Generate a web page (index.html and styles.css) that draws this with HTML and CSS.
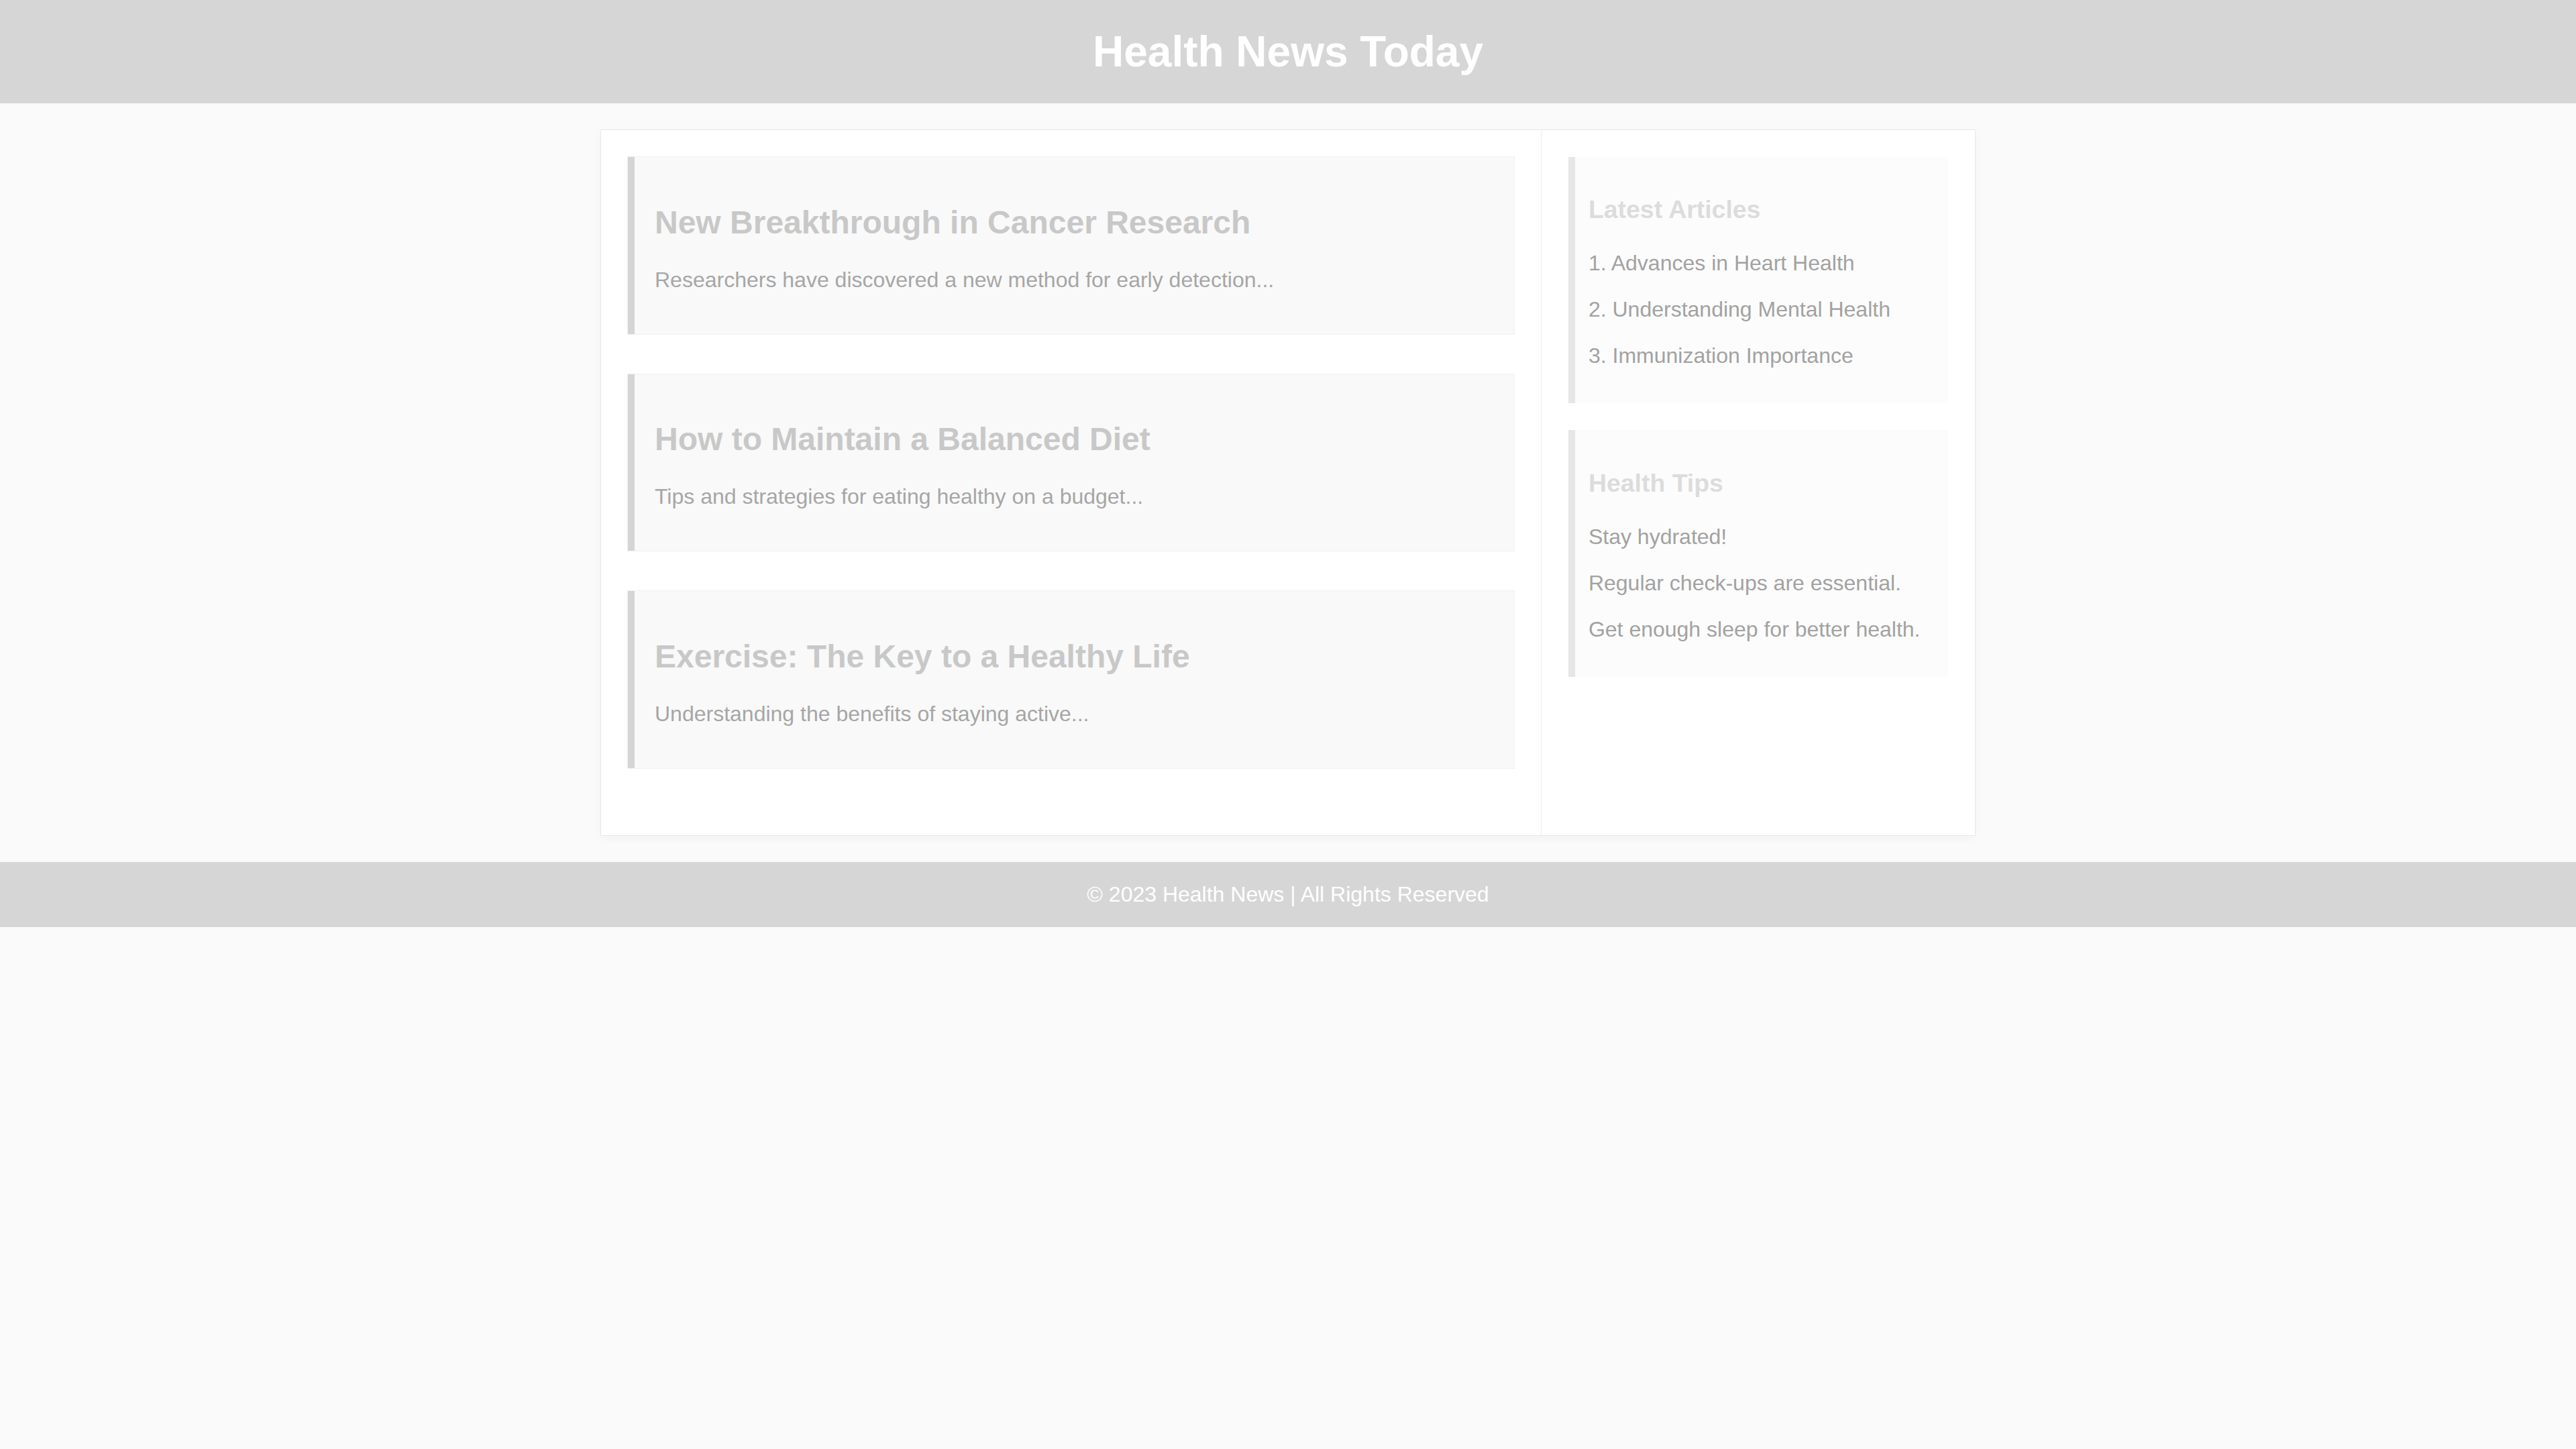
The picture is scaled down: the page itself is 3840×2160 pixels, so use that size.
FILE: index.html
```html
<!DOCTYPE html>
<html lang="en">
<head>
<meta charset="utf-8">
<title>Health News Today</title>
<link rel="stylesheet" href="styles.css">
</head>
<body>
<header class="site-header">
  <h1 class="site-title">Health News Today</h1>
</header>
<div class="container">
  <main class="main-col">
    <article class="article">
      <h2 class="article-title">New Breakthrough in Cancer Research</h2>
      <p class="article-text">Researchers have discovered a new method for early detection...</p>
    </article>
    <article class="article">
      <h2 class="article-title">How to Maintain a Balanced Diet</h2>
      <p class="article-text">Tips and strategies for eating healthy on a budget...</p>
    </article>
    <article class="article">
      <h2 class="article-title">Exercise: The Key to a Healthy Life</h2>
      <p class="article-text">Understanding the benefits of staying active...</p>
    </article>
  </main>
  <aside class="sidebar">
    <section class="widget">
      <h3 class="widget-title">Latest Articles</h3>
      <p class="widget-item">1. Advances in Heart Health</p>
      <p class="widget-item">2. Understanding Mental Health</p>
      <p class="widget-item">3. Immunization Importance</p>
    </section>
    <section class="widget">
      <h3 class="widget-title">Health Tips</h3>
      <p class="widget-item">Stay hydrated!</p>
      <p class="widget-item">Regular check-ups are essential.</p>
      <p class="widget-item">Get enough sleep for better health.</p>
    </section>
  </aside>
</div>
<footer class="site-footer">
  <p class="footer-text">© 2023 Health News | All Rights Reserved</p>
</footer>
</body>
</html>
```

FILE: styles.css
```css
html, body {
  margin: 0;
  padding: 0;
}

body {
  background: #fafafa;
  font-family: "Liberation Sans", Arial, sans-serif;
  font-size: 32px;
  color: #a6a6a6;
}

.site-header {
  background: #d6d6d6;
  padding: 40px;
  text-align: center;
}

.site-title {
  margin: 0;
  font-size: 64px;
  font-weight: bold;
  color: #ffffff;
}

.container {
  box-sizing: border-box;
  width: 2048px;
  margin: 40px auto;
  padding: 0 40px;
  background: #ffffff;
  display: flex;
  align-items: stretch;
  box-shadow: 0 0 0 1px #e8e8e8, 0 4px 14px rgba(0, 0, 0, 0.04);
}

.main-col {
  flex: 7;
  padding: 40px 40px 40px 0;
  border-right: 1px solid #ececec;
}

.sidebar {
  flex: 3;
  padding: 40px 0 40px 40px;
}

.article {
  background: #f9f9f9;
  border-left: 10px solid #d5d5d5;
  padding: 30px;
  margin-bottom: 60px;
  box-shadow: 0 0 0 1px #f1f1f1;
}

.article-title {
  font-size: 48px;
  margin: 0.83em 0;
  color: #c8c8c8;
}

.article-text {
  margin: 32px 0;
  color: #a6a6a6;
}

.widget {
  background: #fcfcfc;
  border-left: 10px solid #e6e6e6;
  padding: 20px;
  margin-bottom: 40px;
}

.widget-title {
  font-size: 1.17em;
  margin: 1em 0 40px;
  color: #dcdcdc;
}

.widget-item {
  margin: 32px 0;
  color: #a2a2a2;
}

.site-footer {
  background: #d6d6d6;
  padding: 30px;
  text-align: center;
}

.footer-text {
  margin: 0;
  color: #ffffff;
}
```
